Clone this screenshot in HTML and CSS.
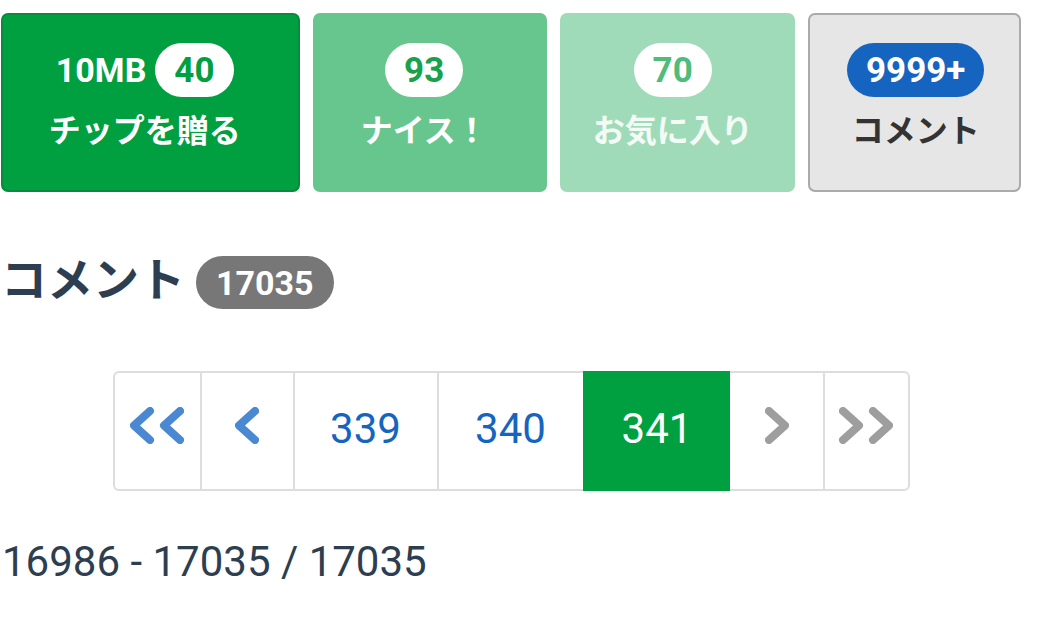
FILE: index.html
```html
<!DOCTYPE html>
<html lang="ja">
<head>
<meta charset="utf-8">
<title>コメント</title>
<link rel="stylesheet" href="styles.css">
</head>
<body>
<div class="page">
  <div class="actions">
    <button class="act act-tip">
      <span class="act-top"><span class="size">10MB</span><span class="pill pill-tip">40</span></span>
      <span class="act-label">チップを贈る</span>
    </button>
    <button class="act act-nice">
      <span class="act-top"><span class="pill pill-nice">93</span></span>
      <span class="act-label">ナイス！</span>
    </button>
    <button class="act act-fav">
      <span class="act-top"><span class="pill pill-fav">70</span></span>
      <span class="act-label">お気に入り</span>
    </button>
    <button class="act act-comment">
      <span class="act-top"><span class="pill pill-comment">9999+</span></span>
      <span class="act-label">コメント</span>
    </button>
  </div>

  <div class="heading">
    <h2 class="heading-title">コメント</h2>
    <span class="heading-badge">17035</span>
  </div>

  <nav class="pager-wrap">
    <ul class="pager">
      <li class="pg pg-first"><svg class="ico" width="54" height="37" viewBox="0 0 54 37"><polyline points="20,4 4,18.5 20,33" class="chev"/><polyline points="50,4 34,18.5 50,33" class="chev"/></svg></li>
      <li class="pg pg-prev"><svg class="ico" width="24" height="37" viewBox="0 0 24 37"><polyline points="20,4 4,18.5 20,33" class="chev"/></svg></li>
      <li class="pg pg-num pg-339">339</li>
      <li class="pg pg-num pg-340">340</li>
      <li class="pg pg-num pg-active">341</li>
      <li class="pg pg-next"><svg class="ico" width="24" height="37" viewBox="0 0 24 37"><polyline points="4,4 20,18.5 4,33" class="chev"/></svg></li>
      <li class="pg pg-last"><svg class="ico" width="54" height="37" viewBox="0 0 54 37"><polyline points="4,4 20,18.5 4,33" class="chev"/><polyline points="34,4 50,18.5 34,33" class="chev"/></svg></li>
    </ul>
  </nav>

  <p class="range">16986 - 17035 / 17035</p>
</div>
</body>
</html>
```

FILE: styles.css
```css
* { box-sizing: border-box; }
html, body { margin: 0; padding: 0; background: #fff; }
body {
  font-family: Roboto, "Noto Sans CJK JP", sans-serif;
  color: #2c3e50;
}
.page {
  width: 1021px;
  padding-left: 1px;
}
.actions {
  display: flex;
  gap: 13px;
  margin-top: 13px;
}
.act {
  height: 179px;
  border: 2px solid transparent;
  border-radius: 7px;
  padding: 28px 12px 0 0;
  margin: 0;
  display: flex;
  flex-direction: column;
  align-items: center;
  gap: 8px;
  font: inherit;
  color: #fff;
  cursor: pointer;
}
.act-tip { width: 300px; background: #00a040; border-color: #088b3c; }
.act-nice { width: 234px; background: #66c68d; border-color: #66c68d; }
.act-fav { width: 236px; background: #9fdbb8; border-color: #9fdbb8; color: #f4fbf7; padding-right: 10px; }
.act-comment { width: 213px; background: #e6e6e6; border-color: #aaaaaa; color: #333; padding-right: 0; padding-left: 2px; }
.act-top {
  display: flex;
  align-items: center;
  gap: 9px;
  height: 54px;
}
.size {
  font-family: Roboto, sans-serif;
  font-weight: 700;
  font-size: 34px;
}
.pill {
  display: inline-flex;
  align-items: center;
  justify-content: center;
  height: 54px;
  padding: 0 19px;
  border-radius: 27px;
  background: #fff;
  font-family: Roboto, sans-serif;
  font-weight: 700;
  font-size: 35px;
}
.pill-tip { color: #00a040; }
.pill-nice { color: #17a24b; }
.pill-fav { color: #4fbc7a; }
.pill-comment { background: #1565c0; color: #fff; padding: 0 19px; }
.act-label {
  font-family: "Noto Sans CJK JP", sans-serif;
  font-weight: 700;
  font-size: 32px;
  line-height: 46px;
}

.heading {
  display: flex;
  align-items: center;
  gap: 11px;
  margin-top: 64px;
  height: 53px;
}
.heading-title {
  margin: 0;
  padding-bottom: 12px;
  font-family: "Noto Sans CJK JP", sans-serif;
  font-weight: 700;
  font-size: 46px;
  line-height: 53px;
  color: #2c3e50;
}
.heading-badge {
  display: inline-flex;
  align-items: center;
  height: 53px;
  padding: 0 20px;
  border-radius: 27px;
  background: #777;
  color: #fff;
  font-family: Roboto, sans-serif;
  font-weight: 700;
  font-size: 34px;
}

.pager-wrap {
  display: flex;
  justify-content: center;
  margin-top: 62px;
}
.pager {
  display: flex;
  list-style: none;
  margin: 0;
  padding: 0;
}
.pg {
  flex-shrink: 0;
  height: 120px;
  display: flex;
  align-items: center;
  justify-content: center;
  padding-bottom: 6px;
  border: 2px solid #dddddd;
  border-right: none;
  font-family: Roboto, sans-serif;
  font-size: 42px;
  color: #1565c0;
}
.ico { margin-bottom: 5px; }
.pg-first { width: 87px; border-radius: 6px 0 0 6px; }
.pg-prev { width: 93px; }
.pg-339 { width: 144px; }
.pg-340 { width: 146px; }
.pg-active { width: 147px; background: #00a040; border-color: #00a040; color: #fff; }
.pg-next { width: 93px; border-left: none; padding-left: 2px; }
.pg-last { width: 87px; border-right: 2px solid #dddddd; border-radius: 0 6px 6px 0; }
.chev {
  fill: none;
  stroke-width: 8;
  stroke-linecap: round;
  stroke-linejoin: round;
}
.pg-first .chev, .pg-prev .chev { stroke: #4a88d2; }
.pg-next .chev, .pg-last .chev { stroke: #9e9e9e; }

.range {
  margin: 47px 0 0;
  padding-left: 1px;
  font-family: Roboto, sans-serif;
  font-size: 42px;
  line-height: 48px;
  color: #2c3e50;
}
```
